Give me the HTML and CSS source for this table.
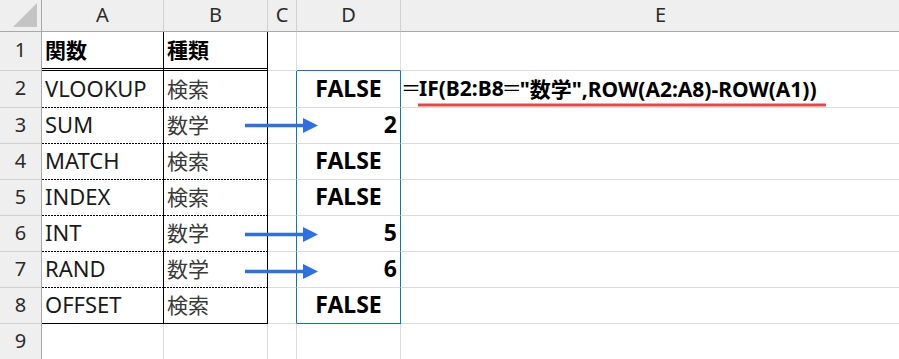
FILE: index.html
```html
<!DOCTYPE html>
<html lang="ja">
<head>
  <meta charset="UTF-8">
  <title>IF ROW</title>
  <link rel="stylesheet" href="styles.css">
</head>
<body>
  <div class="sheet">
    <div class="grid">
      <!-- column headers -->
      <div class="c corner">
        <svg width="26" height="26" viewBox="0 0 26 26"><polygon points="25,1 25,25 1,25" fill="#c4c4c4"/></svg>
      </div>
      <div class="c col">A</div>
      <div class="c col">B</div>
      <div class="c col">C</div>
      <div class="c col">D</div>
      <div class="c col">E</div>

      <!-- 1 -->
      <div class="c num-h">1</div>
      <div class="c jp bold head">関数</div>
      <div class="c jp bold head">種類</div>
      <div class="c"></div>
      <div class="c box-top"></div>
      <div class="c"></div>

      <!-- 2 -->
      <div class="c num-h">2</div>
      <div class="c en dot">VLOOKUP</div>
      <div class="c jp dot">検索</div>
      <div class="c box-left"></div>
      <div class="c box res mid">FALSE</div>
      <div class="c formula"><span class="eq">＝</span>IF(B2:B8<span class="eq">＝</span>"数学",ROW(A2:A8)-ROW(A1))</div>

      <!-- 3 -->
      <div class="c num-h">3</div>
      <div class="c en dot">SUM</div>
      <div class="c jp dot">数学</div>
      <div class="c box-left"></div>
      <div class="c box res right">2</div>
      <div class="c"></div>

      <!-- 4 -->
      <div class="c num-h">4</div>
      <div class="c en dot">MATCH</div>
      <div class="c jp dot">検索</div>
      <div class="c box-left"></div>
      <div class="c box res mid">FALSE</div>
      <div class="c"></div>

      <!-- 5 -->
      <div class="c num-h">5</div>
      <div class="c en dot">INDEX</div>
      <div class="c jp dot">検索</div>
      <div class="c box-left"></div>
      <div class="c box res mid">FALSE</div>
      <div class="c"></div>

      <!-- 6 -->
      <div class="c num-h">6</div>
      <div class="c en dot">INT</div>
      <div class="c jp dot">数学</div>
      <div class="c box-left"></div>
      <div class="c box res right">5</div>
      <div class="c"></div>

      <!-- 7 -->
      <div class="c num-h">7</div>
      <div class="c en dot">RAND</div>
      <div class="c jp dot">数学</div>
      <div class="c box-left"></div>
      <div class="c box res right">6</div>
      <div class="c"></div>

      <!-- 8 -->
      <div class="c num-h">8</div>
      <div class="c en last">OFFSET</div>
      <div class="c jp last">検索</div>
      <div class="c box-left"></div>
      <div class="c box box-end res mid">FALSE</div>
      <div class="c"></div>

      <!-- 9 -->
      <div class="c num-h">9</div>
      <div class="c"></div>
      <div class="c"></div>
      <div class="c"></div>
      <div class="c"></div>
      <div class="c"></div>
    </div>

    <!-- arrows and underline drawn over the cells -->
    <svg class="marks" width="899" height="359" viewBox="0 0 899 359">
      <defs>
        <g id="arrow">
          <path d="M245 0H305" stroke="#2f6fe5" stroke-width="3.5"/>
          <polygon points="303,-7.5 318,0 303,7.5" fill="#2f6fe5"/>
        </g>
      </defs>
      <use href="#arrow" y="125.5"/>
      <use href="#arrow" y="234.5"/>
      <use href="#arrow" y="271.5"/>
      <line x1="418" y1="105" x2="826" y2="105" stroke="#e5484b" stroke-width="3"/>
    </svg>
  </div>
</body>
</html>
```

FILE: styles.css
```css
body {
  margin: 0;
  background: #ffffff;
  overflow: hidden;
}
.sheet {
  position: relative;
  width: 899px;
  height: 359px;
  overflow: hidden;
}
.grid {
  display: grid;
  grid-template-columns: 42px 122px 104px 29px 104px 520px;
  grid-template-rows: 32px 39px 37px repeat(7, 36px);
}
.c {
  box-sizing: border-box;
  display: flex;
  align-items: center;
  padding: 0 3px 3px;
  border-right: 1px solid #dcdcdc;
  border-bottom: 1px solid #dcdcdc;
  white-space: nowrap;
  font-family: "Noto Sans", "Noto Sans CJK JP", sans-serif;
  font-size: 22px;
  color: #000;
}

/* headers */
.corner {
  background: #efefef;
  border-right-color: #a8a8a8;
  border-bottom-color: #a8a8a8;
  align-items: flex-end;
  justify-content: flex-end;
  padding: 0 3px 3px 0;
}
.col {
  background: #efefef;
  border-right-color: #d0d0d0;
  border-bottom-color: #a8a8a8;
  justify-content: center;
  font-size: 20px;
  color: #2b2b2b;
  padding: 0 0 2px;
}
.num-h {
  background: #efefef;
  border-right-color: #a8a8a8;
  border-bottom-color: #d0d0d0;
  justify-content: center;
  font-size: 20px;
  color: #2b2b2b;
  padding: 0 0 3px;
}

/* table A1:B8 */
.en {
  color: #1a1a1a;
}
.jp {
  font-family: "Noto Sans CJK JP", sans-serif;
  font-size: 21px;
  color: #3a3a3a;
}
.bold {
  font-weight: bold;
  color: #000;
}
.head {
  border-right: 1px solid #000;
  border-bottom: 3px double #000;
}
.dot {
  border-right: 1px solid #000;
  border-bottom: 1px solid transparent;
  background: repeating-linear-gradient(90deg, #000 0 2px, transparent 2px 3px) left bottom / 100% 1px no-repeat border-box;
}
.last {
  border-right: 1px solid #000;
  border-bottom: 1px solid #000;
}

/* result column D2:D8 */
.box-top {
  border-bottom-color: #1273c6;
}
.box-left {
  border-right-color: #1273c6;
}
.box {
  border-right-color: #1273c6;
}
.box-end {
  border-bottom-color: #1273c6;
}
.res {
  font-weight: bold;
  font-size: 23px;
}
.mid {
  justify-content: center;
}
.right {
  justify-content: flex-end;
}

.formula {
  font-size: 21px;
  font-weight: bold;
  padding-left: 2px;
}
.eq {
  font-family: "Noto Sans CJK JP", sans-serif;
  font-size: 20px;
  font-weight: normal;
  margin: 0 -2px;
}

.marks {
  position: absolute;
  left: 0;
  top: 0;
}
```
